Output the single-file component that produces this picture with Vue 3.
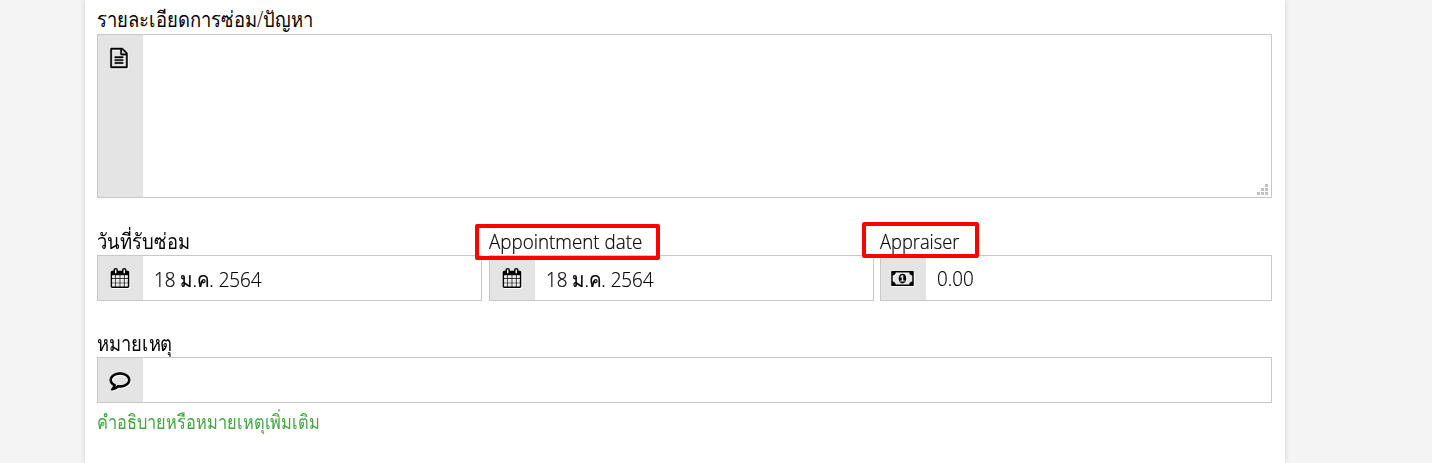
<script setup>
    import { ref } from 'vue';

    const detail = ref('');
    const comment = ref('');

    const fields = ref([
        { key: 'received', label: 'วันที่รับซ่อม', value: '18 ม.ค. 2564', icon: 'calendar', marked: false },
        { key: 'appointment', label: 'Appointment date', value: '18 ม.ค. 2564', icon: 'calendar', marked: true },
        { key: 'appraiser', label: 'Appraiser', value: '0.00', icon: 'money', marked: true },
    ]);

    const icons = {
        file: {
            box: '0 0 1792 1792',
            path: 'M1596 380q28 28 48 76t20 88v1152q0 40-28 68t-68 28h-1344q-40 0-68-28t-28-68v-1600q0-40 28-68t68-28h896q40 0 88 20t76 48zm-444-244v376h376q-10-29-22-41l-313-313q-12-12-41-22zm384 1528v-1024h-416q-40 0-68-28t-28-68v-416h-768v1536h1280zm-1024-864q0-14 9-23t23-9h704q14 0 23 9t9 23v64q0 14-9 23t-23 9h-704q-14 0-23-9t-9-23v-64zm736 224q14 0 23 9t9 23v64q0 14-9 23t-23 9h-704q-14 0-23-9t-9-23v-64q0-14 9-23t23-9h704zm0 256q14 0 23 9t9 23v64q0 14-9 23t-23 9h-704q-14 0-23-9t-9-23v-64q0-14 9-23t23-9h704z',
        },
        calendar: {
            box: '0 0 1792 1792',
            path: 'M192 1664h288v-288h-288v288zm352 0h320v-288h-320v288zm-352-352h288v-320h-288v320zm352 0h320v-320h-320v320zm-352-384h288v-288h-288v288zm736 736h320v-288h-320v288zm-384-736h320v-288h-320v288zm768 736h288v-288h-288v288zm-384-352h320v-320h-320v320zm-352-864v-288q0-13-9.5-22.5t-22.5-9.5h-64q-13 0-22.5 9.5t-9.5 22.5v288q0 13 9.5 22.5t22.5 9.5h64q13 0 22.5-9.5t9.5-22.5zm736 864h288v-320h-288v320zm-384-384h320v-288h-320v288zm384 0h288v-288h-288v288zm32-480v-288q0-13-9.5-22.5t-22.5-9.5h-64q-13 0-22.5 9.5t-9.5 22.5v288q0 13 9.5 22.5t22.5 9.5h64q13 0 22.5-9.5t9.5-22.5zm384-64v1280q0 52-38 90t-90 38h-1408q-52 0-90-38t-38-90v-1280q0-52 38-90t90-38h128v-96q0-66 47-113t113-47h64q66 0 113 47t47 113v96h384v-96q0-66 47-113t113-47h64q66 0 113 47t47 113v96h128q52 0 90 38t38 90z',
        },
        money: {
            box: '0 0 1920 1792',
            path: 'M768 1152h384v-96h-128v-448h-114l-148 137 77 80q42-37 55-57h2v288h-128v96zm512-256q0 70-21 142t-59.5 134-101.5 101-138 39-138-39-101.5-101-59.5-134-21-142 21-142 59.5-134 101.5-101 138-39 138 39 101.5 101 59.5 134 21 142zm512 256v-512q-106 0-181-75t-75-181h-1152q0 106-75 181t-181 75v512q106 0 181 75t75 181h1152q0-106 75-181t181-75zm128-832v1152q0 26-19 45t-45 19h-1792q-26 0-45-19t-19-45v-1152q0-26 19-45t45-19h1792q26 0 45 19t19 45z',
        },
        comment: {
            box: '0 0 1792 1792',
            path: 'M896 384q-204 0-381.5 69.5t-282 187.5-104.5 255q0 112 71.5 213.5t201.5 175.5l87 50-27 96q-24 91-70 172 152-63 275-171l43-38 57 6q69 8 130 8 204 0 381.5-69.5t282-187.5 104.5-255-104.5-255-282-187.5-381.5-69.5zm896 512q0 174-120 321.5t-326 233-450 85.5q-70 0-145-8-198 175-460 242-49 14-114 22h-5q-15 0-27-10.5t-16-27.5v-1q-3-4-.5-12t2-10 4.5-9.5l6-9 7-8.5 8-9q7-8 31-34.5t34.5-38 31-39.5 32.5-51 27-59 26-76q-157-89-247.5-220t-90.5-281q0-174 120-321.5t326-233 450-85.5 450 85.5 326 233 120 321.5z',
        },
    };
</script>

<template>
    <div class="page">
        <main class="form">
            <section class="item">
                <label class="label"><span class="text detail-label">รายละเอียดการซ่อม/ปัญหา</span></label>
                <div class="control detail">
                    <div class="addon">
                        <svg class="icon file" :viewBox="icons.file.box"><path :d="icons.file.path" /></svg>
                    </div>
                    <textarea v-model="detail" class="input" />
                    <svg class="grip" viewBox="0 0 11 11">
                        <path d="M8 0h3v3H8zM4 4h3v3H4zM8 4h3v3H8zM0 8h3v3H0zM4 8h3v3H4zM8 8h3v3H8z" />
                    </svg>
                </div>
            </section>

            <section class="row">
                <div v-for="field in fields" :key="field.key" class="item">
                    <label class="label" :class="field.key">
                        <span class="text">{{ field.label }}</span>
                        <i v-if="field.marked" class="mark" />
                    </label>
                    <div class="control">
                        <div class="addon">
                            <svg class="icon" :class="field.icon" :viewBox="icons[field.icon].box"><path :d="icons[field.icon].path" /></svg>
                        </div>
                        <div class="input" :class="field.icon + '-input'"><span class="text value">{{ field.value }}</span></div>
                    </div>
                </div>
            </section>

            <section class="item">
                <label class="label"><span class="text">หมายเหตุ</span></label>
                <div class="control">
                    <div class="addon">
                        <svg class="icon comment" :viewBox="icons.comment.box"><path :d="icons.comment.path" /></svg>
                    </div>
                    <input v-model="comment" class="input" type="text">
                </div>
                <p class="hint"><span class="text">คำอธิบายหรือหมายเหตุเพิ่มเติม</span></p>
            </section>
        </main>
    </div>
</template>

<style>
    body {
        margin: 0;
        background: #f4f4f4;
        overflow: hidden;
    }
</style>

<style scoped>
    .page {
        height: 463px;
        padding: 0 147px 0 85px;
        background: #f4f4f4;
        font-family: "Open Sans", "Noto Sans", sans-serif;
        font-size: 20px;
        font-weight: 300;
        color: #000;
    }

    .form {
        box-sizing: border-box;
        height: 100%;
        padding: 7px 13px 0 12px;
        background: #fff;
        box-shadow: 0 0 5px rgba(0, 0, 0, 0.15);
    }

    .label {
        position: relative;
        display: block;
        height: 27px;
        line-height: 27px;
        white-space: nowrap;
    }

    /* narrow letterforms */
    .text {
        display: inline-block;
        transform: scale(0.92, 1.08);
        transform-origin: 0 60%;
    }

    .detail-label {
        transform: translateY(-1px) scale(0.92, 1.08);
    }

    .appointment .text {
        transform: scale(0.94, 1.04);
        -webkit-text-stroke: 0.2px #000;
    }

    .appraiser .text {
        transform: scale(0.915, 1.04);
        -webkit-text-stroke: 0.2px #000;
    }

    .value {
        transform: scale(0.94, 1.04);
        -webkit-text-stroke: 0.2px #000;
    }

    .row {
        display: grid;
        grid-template-columns: 385px 385px 392px;
        column-gap: 7px;
        margin: 30px 0 29px;
    }

    .row .item:last-child {
        margin-left: -1px;
        width: 392px;
    }

    .control {
        position: relative;
        display: flex;
        box-sizing: border-box;
        height: 46px;
        border: 1px solid #c8c8c8;
    }

    .detail {
        height: 164px;
    }

    .addon {
        display: flex;
        flex: none;
        align-items: center;
        justify-content: center;
        box-sizing: border-box;
        width: 45px;
        padding-right: 2px;
        background: #e4e4e4;
    }

    .detail .addon {
        align-items: flex-start;
        padding-top: 13px;
        padding-right: 4px;
    }

    .icon {
        width: 20px;
        height: 20px;
        overflow: visible;
        filter: drop-shadow(1px 1px 0 #fff);
    }

    .money {
        width: 23px;
        height: 21px;
    }

    .file path {
        stroke: #000;
        stroke-width: 40px;
    }

    .comment path {
        stroke: #000;
        stroke-width: 100px;
    }

    .input {
        flex: 1;
        min-width: 0;
        box-sizing: border-box;
        padding: 0 11px;
        border: 0;
        outline: none;
        resize: none;
        background: transparent;
        font: inherit;
        color: inherit;
        line-height: 46px;
        white-space: nowrap;
    }

    .calendar-input {
        line-height: 48px;
    }

    .grip {
        position: absolute;
        right: 3px;
        bottom: 2px;
        width: 11px;
        height: 11px;
        fill: #c0c0c0;
    }

    .mark {
        position: absolute;
        top: -4px;
        left: -14px;
        box-sizing: border-box;
        width: 185px;
        height: 36px;
        border: 4px solid #fe0000;
        border-radius: 2px;
        z-index: 1;
    }

    .appraiser .mark {
        top: -6px;
        left: -18px;
        width: 117px;
    }

    .hint {
        margin: 5px 0 0;
        font-size: 18px;
        line-height: 28px;
        color: #41a541;
        white-space: nowrap;
    }

    .hint .text {
        transform: scale(0.912, 1.1);
    }
</style>
